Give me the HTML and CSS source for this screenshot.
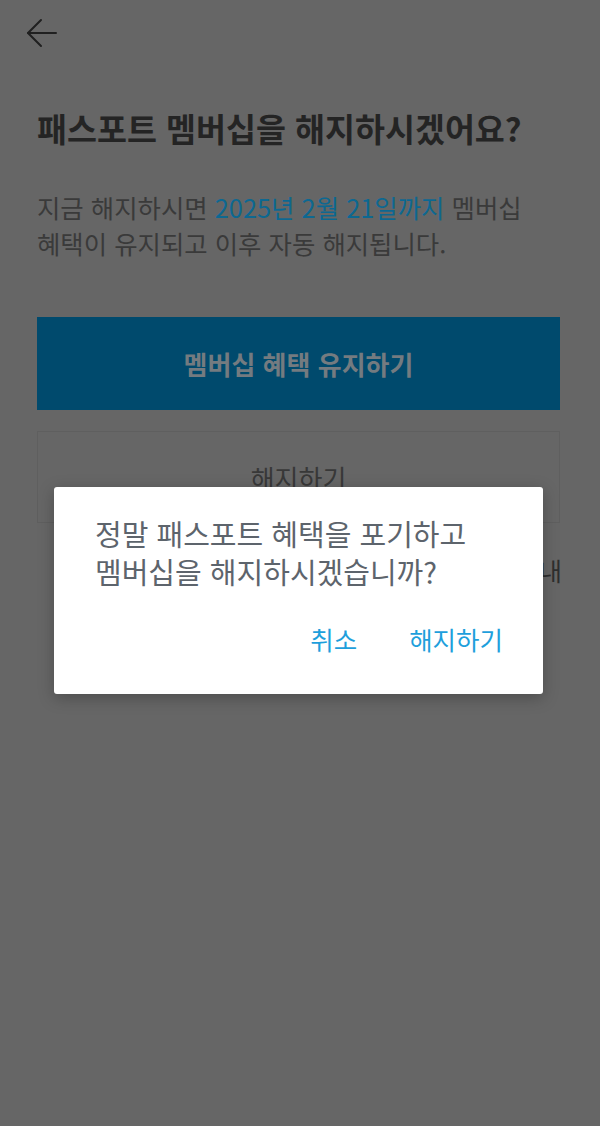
FILE: index.html
```html
<!DOCTYPE html>
<html lang="ko">
<head>
  <meta charset="UTF-8">
  <title>패스포트 멤버십 해지</title>
  <link rel="stylesheet" href="styles.css">
</head>
<body>
  <header class="topbar">
    <button class="back" aria-label="뒤로">
      <svg width="32" height="30" viewBox="0 0 32 30" fill="none" stroke="#202020" stroke-width="2" stroke-linecap="round" stroke-linejoin="round">
        <path d="M30 15 H2"/>
        <path d="M15 2 L2 15 L15 28"/>
      </svg>
    </button>
  </header>

  <main class="content">
    <h1 class="title">패스포트 멤버십을 해지하시겠어요?</h1>
    <p class="desc">지금 해지하시면 <span class="date">2025년 2월 21일까지</span> 멤버십<br>혜택이 유지되고 이후 자동 해지됩니다.</p>

    <button class="btn-keep">멤버십 혜택 유지하기</button>
    <button class="btn-cancel">해지하기</button>

    <p class="note">멤버십 해지 안내</p>
  </main>

  <div class="dialog">
    <p class="dialog-msg">정말 패스포트 혜택을 포기하고<br>멤버십을 해지하시겠습니까?</p>
    <div class="dialog-actions">
      <button class="dialog-btn">취소</button>
      <button class="dialog-btn">해지하기</button>
    </div>
  </div>
</body>
</html>
```

FILE: styles.css
```css
body {
  margin: 0;
  font-family: "Noto Sans CJK KR", "Noto Sans", sans-serif;
  background-color: #666666;
  color: #3c3c3c;
  min-height: 1126px;
  position: relative;
}

button {
  font-family: inherit;
}

.topbar {
  height: 66px;
  display: flex;
  align-items: center;
  padding-left: 26px;
}

.back {
  background: none;
  border: none;
  padding: 0;
  display: flex;
}

.content {
  padding: 0 40px 0 37px;
}

.title {
  margin: 42px 0 0;
  font-size: 32.6px;
  line-height: 40px;
  font-weight: 700;
  color: #242424;
  white-space: nowrap;
}

.desc {
  margin: 41px 0 0;
  font-size: 25.4px;
  line-height: 36px;
  color: #3a3a3a;
  white-space: nowrap;
}

.date {
  color: #0d6891;
}

.btn-keep {
  display: block;
  width: 100%;
  height: 93px;
  margin-top: 56px;
  border: none;
  background-color: #004a6d;
  color: #747b80;
  font-size: 26px;
  font-weight: 700;
}

.btn-cancel {
  display: block;
  width: 100%;
  height: 92px;
  margin-top: 21px;
  border: 1px solid #5f5f5f;
  background-color: #666666;
  color: #383838;
  font-size: 26px;
}

.note {
  margin: 29px -2px 0 0;
  font-size: 25px;
  line-height: 36px;
  text-align: right;
  color: #2e2e2e;
}

.dialog {
  position: absolute;
  left: 54px;
  top: 487px;
  width: 489px;
  height: 207px;
  box-sizing: border-box;
  background: #ffffff;
  border-radius: 3px;
  box-shadow: 0 4px 16px rgba(0, 0, 0, 0.25);
  padding: 27px 40px 0 41px;
}

.dialog-msg {
  margin: 0;
  font-size: 29px;
  line-height: 38px;
  color: #5d646c;
  white-space: nowrap;
}

.dialog-actions {
  display: flex;
  justify-content: flex-end;
  gap: 52px;
  margin-top: 32px;
}

.dialog-btn {
  background: none;
  border: none;
  padding: 0;
  font-size: 25.5px;
  line-height: 34px;
  color: #1e9fdc;
}
```
